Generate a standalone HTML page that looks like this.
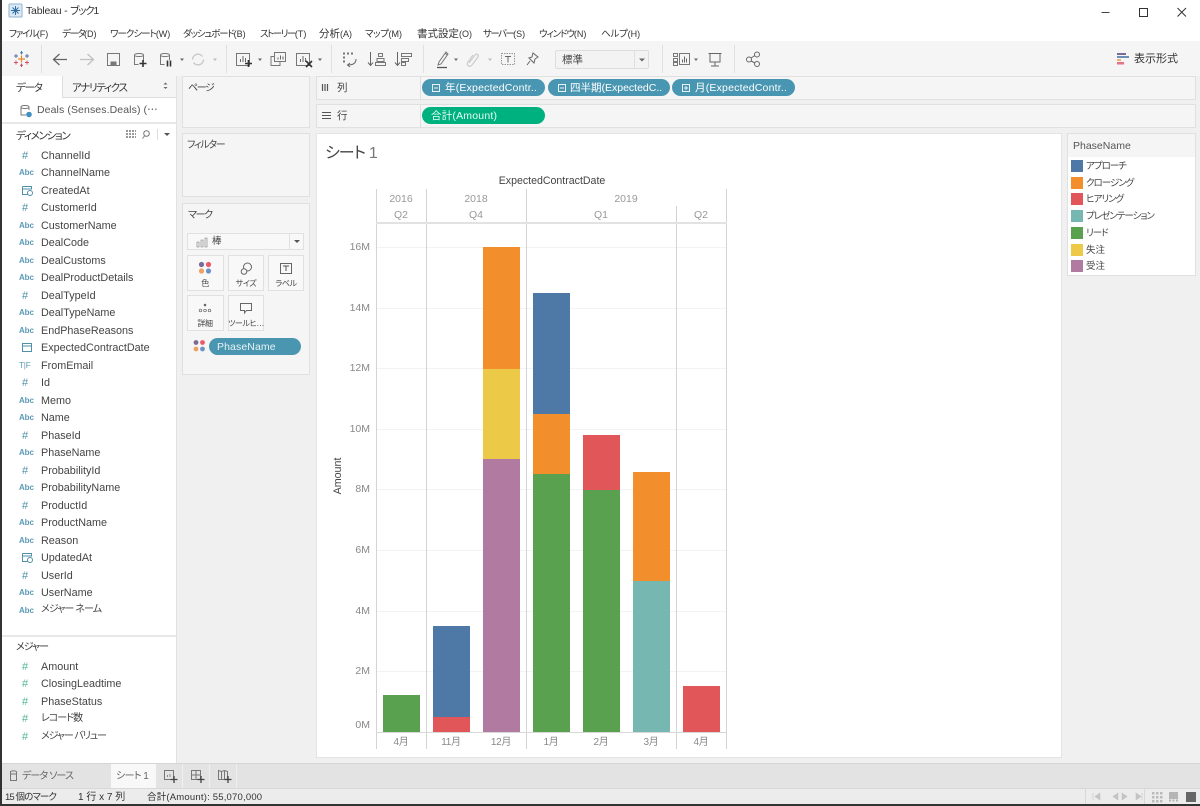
<!DOCTYPE html>
<html lang="ja"><head><meta charset="utf-8"><title>Tableau - ブック1</title>
<style>
html,body{margin:0;padding:0;background:#f0f0f0}
body{position:relative;width:1200px;height:806px;overflow:hidden;font-family:"Liberation Sans","Noto Sans CJK JP",sans-serif;color:#444;font-feature-settings:"palt";filter:blur(.3px)}
.b{position:absolute;box-sizing:border-box}
.c{position:absolute;box-sizing:border-box;background:#f5f5f5;border:1px solid #e0e0e0}
.t{position:absolute;white-space:nowrap;line-height:14px;height:14px}
.m{font-size:9.5px;color:#333;top:27px}
.m i{font-style:normal;letter-spacing:0;font-size:9px}
.f{font-size:10.8px;left:41px;color:#444;margin-top:1px}
.a{font-size:8px;left:19px;color:#5b9ab5;font-weight:bold;letter-spacing:-.1px;margin-top:1px}
.h{font-size:11px;left:22px;color:#4f8fa8;margin-top:1px}
.g{font-size:11px;left:22px;color:#4fb493;margin-top:1px}
.y{font-size:10.5px;color:#888;text-align:right;width:30px;left:340px}
.x{font-size:10px;color:#888;text-align:center;width:50px;top:736px;letter-spacing:-.3px}
.q{font-size:10.5px;color:#999;text-align:center;width:50px}
.p{position:absolute;border-radius:9px;background:#4996b2;color:#fff;font-size:10.5px;line-height:18px;height:17px;white-space:nowrap;box-sizing:border-box;overflow:hidden;letter-spacing:.2px}
.l{font-size:9.5px;letter-spacing:-1px;left:1086px;color:#444;margin-top:1px}
.s{position:absolute;left:1071px;width:12px;height:12px}
.k{font-size:8px;letter-spacing:-.4px;color:#444;text-align:center;width:36px}
.n{position:absolute;box-sizing:border-box;background:#f8f8f8;border:1px solid #e0e0e0}
.w{position:absolute;left:383px;width:37px}
</style></head><body>

<div class="b" style="left:0;top:0;width:1200px;height:41px;background:#fff"></div>
<div class="b" style="left:0;top:41px;width:1200px;height:35px;background:#f5f5f5"></div>
<div class="b" style="left:0;top:0;width:1.5px;height:806px;background:#333;z-index:9"></div>
<div class="b" style="left:0;top:804px;width:1200px;height:2px;background:#333;z-index:9"></div>

<div class="t" style="left:26px;top:4px;font-size:10.5px;letter-spacing:-.2px;color:#333">Tableau - <span style="letter-spacing:-1.2px">ブック1</span></div>
<div class="t m" style="left:9px;letter-spacing:-1.3px">ファイル<i>(F)</i></div>
<div class="t m" style="left:62px;letter-spacing:-1.5px">データ<i>(D)</i></div>
<div class="t m" style="left:110px;letter-spacing:-1px">ワークシート<i>(W)</i></div>
<div class="t m" style="left:183px;letter-spacing:-1.2px">ダッシュボード<i>(B)</i></div>
<div class="t m" style="left:260px;letter-spacing:-1.5px">ストーリー<i>(T)</i></div>
<div class="t m" style="left:319px;font-size:10.5px">分析<i>(A)</i></div>
<div class="t m" style="left:365px;letter-spacing:-.4px">マップ<i>(M)</i></div>
<div class="t m" style="left:417px;font-size:10.5px">書式設定<i>(O)</i></div>
<div class="t m" style="left:483px;letter-spacing:-1.6px">サーバー<i>(S)</i></div>
<div class="t m" style="left:539px;letter-spacing:-1.1px">ウィンドウ<i>(N)</i></div>
<div class="t m" style="left:601px;letter-spacing:-.2px">ヘルプ<i>(H)</i></div>

<div class="b" style="left:555px;top:50px;width:94px;height:19px;background:#f3f3f3;border:1px solid #ddd;border-radius:2px"></div>
<div class="t" style="left:562px;top:53px;font-size:10.5px;color:#444">標準</div>
<div class="t" style="left:1134px;top:52px;font-size:11px;color:#333;letter-spacing:0">表示形式</div>

<!-- data pane -->
<div class="b" style="left:1px;top:76px;width:175px;height:687px;background:#fff"></div>
<div class="b" style="left:62px;top:76px;width:114px;height:22px;background:#f5f5f5;border-left:1px solid #ddd;border-bottom:1px solid #ddd"></div>
<div class="b" style="left:1px;top:97px;width:61px;height:1px;background:#fff"></div>
<div class="b" style="left:176px;top:76px;width:1px;height:687px;background:#e2e2e2"></div>
<div class="b" style="left:1px;top:122px;width:175px;height:2px;background:#e8e8e8"></div>
<div class="b" style="left:1px;top:635px;width:175px;height:2px;background:#e8e8e8"></div>
<div class="t" style="left:16px;top:81px;font-size:10.5px;letter-spacing:-1.2px;color:#333">データ</div>
<div class="t" style="left:72px;top:81px;font-size:10.5px;letter-spacing:-1.3px;color:#333">アナリティクス</div>
<div class="t" style="left:37px;top:103px;font-size:10.5px;color:#555;letter-spacing:.1px">Deals (Senses.Deals) (⋯</div>
<div class="t" style="left:16px;top:129px;font-size:10.5px;letter-spacing:-1.3px;color:#333">ディメンション</div>

<div class="t h" style="top:148px">#</div><div class="t f" style="top:148px">ChannelId</div>
<div class="t a" style="top:165px">Abc</div><div class="t f" style="top:165px">ChannelName</div>
<div class="t f" style="top:183px">CreatedAt</div>
<div class="t h" style="top:200px">#</div><div class="t f" style="top:200px">CustomerId</div>
<div class="t a" style="top:218px">Abc</div><div class="t f" style="top:218px">CustomerName</div>
<div class="t a" style="top:235px">Abc</div><div class="t f" style="top:235px">DealCode</div>
<div class="t a" style="top:253px">Abc</div><div class="t f" style="top:253px">DealCustoms</div>
<div class="t a" style="top:270px">Abc</div><div class="t f" style="top:270px">DealProductDetails</div>
<div class="t h" style="top:288px">#</div><div class="t f" style="top:288px">DealTypeId</div>
<div class="t a" style="top:305px">Abc</div><div class="t f" style="top:305px">DealTypeName</div>
<div class="t a" style="top:323px">Abc</div><div class="t f" style="top:323px">EndPhaseReasons</div>
<div class="t f" style="top:340px">ExpectedContractDate</div>
<div class="t a" style="top:358px;font-weight:normal">T|F</div><div class="t f" style="top:358px">FromEmail</div>
<div class="t h" style="top:375px">#</div><div class="t f" style="top:375px">Id</div>
<div class="t a" style="top:393px">Abc</div><div class="t f" style="top:393px">Memo</div>
<div class="t a" style="top:410px">Abc</div><div class="t f" style="top:410px">Name</div>
<div class="t h" style="top:428px">#</div><div class="t f" style="top:428px">PhaseId</div>
<div class="t a" style="top:445px">Abc</div><div class="t f" style="top:445px">PhaseName</div>
<div class="t h" style="top:463px">#</div><div class="t f" style="top:463px">ProbabilityId</div>
<div class="t a" style="top:480px">Abc</div><div class="t f" style="top:480px">ProbabilityName</div>
<div class="t h" style="top:498px">#</div><div class="t f" style="top:498px">ProductId</div>
<div class="t a" style="top:515px">Abc</div><div class="t f" style="top:515px">ProductName</div>
<div class="t a" style="top:533px">Abc</div><div class="t f" style="top:533px">Reason</div>
<div class="t f" style="top:550px">UpdatedAt</div>
<div class="t h" style="top:568px">#</div><div class="t f" style="top:568px">UserId</div>
<div class="t a" style="top:585px">Abc</div><div class="t f" style="top:585px">UserName</div>
<div class="t a" style="top:603px">Abc</div><div class="t f" style="top:602px;font-size:10px;letter-spacing:-.9px">メジャー ネーム</div>

<div class="t" style="left:16px;top:641px;font-size:10px;letter-spacing:-1px;color:#333">メジャー</div>
<div class="t g" style="top:659px">#</div><div class="t f" style="top:659px">Amount</div>
<div class="t g" style="top:676px">#</div><div class="t f" style="top:676px">ClosingLeadtime</div>
<div class="t g" style="top:694px">#</div><div class="t f" style="top:694px">PhaseStatus</div>
<div class="t g" style="top:711px">#</div><div class="t f" style="top:711px;font-size:10px;letter-spacing:-1px">レコード数</div>
<div class="t g" style="top:729px">#</div><div class="t f" style="top:729px;font-size:10px;letter-spacing:-1.1px">メジャー バリュー</div>

<!-- cards -->
<div class="c" style="left:182px;top:76px;width:128px;height:52px"></div>
<div class="c" style="left:182px;top:133px;width:128px;height:64px"></div>
<div class="c" style="left:182px;top:203px;width:128px;height:172px"></div>
<div class="t" style="left:188px;top:82px;font-size:10px;letter-spacing:-1.4px;color:#444">ページ</div>
<div class="t" style="left:187px;top:139px;font-size:10px;letter-spacing:-1.3px;color:#444">フィルター</div>
<div class="t" style="left:188px;top:209px;font-size:10px;letter-spacing:-1.3px;color:#444">マーク</div>

<div class="n" style="left:187px;top:233px;width:117px;height:17px;background:#f8f8f8"></div>
<div class="b" style="left:289px;top:234px;width:1px;height:15px;background:#e0e0e0"></div>
<div class="t" style="left:212px;top:235px;font-size:9.5px;color:#444">棒</div>
<div class="n" style="left:187px;top:255px;width:37px;height:36px"></div>
<div class="n" style="left:228px;top:255px;width:36px;height:36px"></div>
<div class="n" style="left:268px;top:255px;width:36px;height:36px"></div>
<div class="n" style="left:187px;top:295px;width:37px;height:36px"></div>
<div class="n" style="left:228px;top:295px;width:36px;height:36px"></div>
<div class="t k" style="left:187px;top:277px">色</div>
<div class="t k" style="left:228px;top:277px">サイズ</div>
<div class="t k" style="left:268px;top:277px">ラベル</div>
<div class="t k" style="left:187px;top:317px">詳細</div>
<div class="t k" style="left:228px;top:317px">ツールヒ…</div>
<div class="p" style="left:209px;top:338px;width:92px;padding-left:8px;background:#4a96b0;color:#e6f2f6;font-size:10.5px;letter-spacing:.1px">PhaseName</div>

<!-- shelves -->
<div class="c" style="left:316px;top:76px;width:880px;height:24px"></div>
<div class="c" style="left:316px;top:104px;width:880px;height:24px"></div>
<div class="b" style="left:420px;top:76px;width:1px;height:24px;background:#e0e0e0"></div>
<div class="b" style="left:420px;top:104px;width:1px;height:24px;background:#e0e0e0"></div>
<div class="t" style="left:337px;top:81px;font-size:10.5px;color:#444">列</div>
<div class="t" style="left:337px;top:109px;font-size:10.5px;color:#444">行</div>
<div class="p" style="left:422px;top:79px;width:123px;padding-left:23px">年(ExpectedContr..</div>
<div class="p" style="left:548px;top:79px;width:122px;padding-left:22px;letter-spacing:0">四半期(ExpectedC..</div>
<div class="p" style="left:672px;top:79px;width:123px;padding-left:23px">月(ExpectedContr..</div>
<div class="p" style="left:422px;top:107px;width:123px;padding-left:9px;background:#00b180;color:#e6fff6">合計(Amount)</div>

<!-- view -->
<div class="b" style="left:316px;top:133px;width:746px;height:625px;background:#fff;border:1px solid #e4e4e4"></div>
<div class="t" style="left:325px;top:145px;font-size:16px;line-height:18px;height:18px;color:#444;letter-spacing:-1px">シート<span style="color:#777;font-weight:normal;margin-left:4px;letter-spacing:0">1</span></div>
<div class="t" style="left:452px;top:174px;width:200px;text-align:center;font-size:10.6px;color:#444">ExpectedContractDate</div>

<!-- gridlines -->
<div class="b" style="left:377px;top:247px;width:350px;height:1px;background:#f3f3f3"></div>
<div class="b" style="left:377px;top:308px;width:350px;height:1px;background:#f3f3f3"></div>
<div class="b" style="left:377px;top:368px;width:350px;height:1px;background:#f3f3f3"></div>
<div class="b" style="left:377px;top:429px;width:350px;height:1px;background:#f3f3f3"></div>
<div class="b" style="left:377px;top:489px;width:350px;height:1px;background:#f3f3f3"></div>
<div class="b" style="left:377px;top:550px;width:350px;height:1px;background:#f3f3f3"></div>
<div class="b" style="left:377px;top:611px;width:350px;height:1px;background:#f3f3f3"></div>
<div class="b" style="left:377px;top:671px;width:350px;height:1px;background:#f3f3f3"></div>

<!-- axis lines -->
<div class="b" style="left:376px;top:189px;width:1px;height:560px;background:#d4d4d4"></div>
<div class="b" style="left:426px;top:189px;width:1px;height:560px;background:#d4d4d4"></div>
<div class="b" style="left:526px;top:189px;width:1px;height:560px;background:#d4d4d4"></div>
<div class="b" style="left:676px;top:206px;width:1px;height:543px;background:#d4d4d4"></div>
<div class="b" style="left:726px;top:189px;width:1px;height:560px;background:#d4d4d4"></div>
<div class="b" style="left:376px;top:222px;width:351px;height:2px;background:#e2e2e2"></div>
<div class="b" style="left:376px;top:732px;width:351px;height:1px;background:#d8d8d8"></div>

<div class="t q" style="left:376px;top:192px">2016</div>
<div class="t q" style="left:451px;top:192px">2018</div>
<div class="t q" style="left:601px;top:192px">2019</div>
<div class="t q" style="left:376px;top:208px">Q2</div>
<div class="t q" style="left:451px;top:208px">Q4</div>
<div class="t q" style="left:576px;top:208px">Q1</div>
<div class="t q" style="left:676px;top:208px">Q2</div>

<div class="t y" style="top:240px">16M</div>
<div class="t y" style="top:301px">14M</div>
<div class="t y" style="top:361px">12M</div>
<div class="t y" style="top:422px">10M</div>
<div class="t y" style="top:482px">8M</div>
<div class="t y" style="top:543px">6M</div>
<div class="t y" style="top:604px">4M</div>
<div class="t y" style="top:664px">2M</div>
<div class="t y" style="top:718px">0M</div>
<div class="t" style="left:318px;top:469px;width:40px;text-align:center;font-size:10.7px;color:#444;transform:rotate(-90deg)">Amount</div>

<!-- bars -->
<div class="w" style="left:383px;top:695px;height:37px;background:#59a14f"></div>
<div class="w" style="left:433px;top:626px;height:91px;background:#4e79a7"></div>
<div class="w" style="left:433px;top:717px;height:15px;background:#e15759"></div>
<div class="w" style="left:483px;top:247px;height:122px;background:#f28e2b"></div>
<div class="w" style="left:483px;top:369px;height:90px;background:#edc948"></div>
<div class="w" style="left:483px;top:459px;height:273px;background:#b07aa1"></div>
<div class="w" style="left:533px;top:293px;height:121px;background:#4e79a7"></div>
<div class="w" style="left:533px;top:414px;height:60px;background:#f28e2b"></div>
<div class="w" style="left:533px;top:474px;height:258px;background:#59a14f"></div>
<div class="w" style="left:583px;top:435px;height:55px;background:#e15759"></div>
<div class="w" style="left:583px;top:490px;height:242px;background:#59a14f"></div>
<div class="w" style="left:633px;top:472px;height:109px;background:#f28e2b"></div>
<div class="w" style="left:633px;top:581px;height:151px;background:#76b7b2"></div>
<div class="w" style="left:683px;top:686px;height:46px;background:#e15759"></div>

<div class="t x" style="left:376px">4月</div>
<div class="t x" style="left:426px">11月</div>
<div class="t x" style="left:476px">12月</div>
<div class="t x" style="left:526px">1月</div>
<div class="t x" style="left:576px">2月</div>
<div class="t x" style="left:626px">3月</div>
<div class="t x" style="left:676px">4月</div>

<!-- legend -->
<div class="b" style="left:1067px;top:133px;width:129px;height:143px;background:#fff;border:1px solid #e0e0e0"></div>
<div class="b" style="left:1068px;top:134px;width:127px;height:23px;background:#f5f5f5"></div>
<div class="t" style="left:1073px;top:139px;font-size:10.5px;color:#555">PhaseName</div>
<div class="s" style="top:160px;background:#4e79a7"></div><div class="t l" style="top:159px">アプローチ</div>
<div class="s" style="top:177px;background:#f28e2b"></div><div class="t l" style="top:176px">クロージング</div>
<div class="s" style="top:193px;background:#e15759"></div><div class="t l" style="top:192px">ヒアリング</div>
<div class="s" style="top:210px;background:#76b7b2"></div><div class="t l" style="top:209px">プレゼンテーション</div>
<div class="s" style="top:227px;background:#59a14f"></div><div class="t l" style="top:226px">リード</div>
<div class="s" style="top:244px;background:#edc948"></div><div class="t l" style="top:243px;letter-spacing:0">失注</div>
<div class="s" style="top:260px;background:#b07aa1"></div><div class="t l" style="top:259px;letter-spacing:0">受注</div>

<!-- bottom -->
<div class="b" style="left:0;top:763px;width:1200px;height:25px;background:#e3e3e3;border-top:1px solid #d5d5d5"></div>
<div class="b" style="left:0;top:788px;width:1200px;height:16px;background:#ececec;border-top:1px solid #d8d8d8"></div>
<div class="b" style="left:111px;top:764px;width:45px;height:24px;background:#f8f8f8"></div>
<div class="b" style="left:182px;top:764px;width:1px;height:24px;background:#efefef"></div>
<div class="b" style="left:209px;top:764px;width:1px;height:24px;background:#efefef"></div>
<div class="b" style="left:236px;top:764px;width:1px;height:24px;background:#efefef"></div>
<div class="t" style="left:22px;top:770px;font-size:10px;letter-spacing:-.9px;color:#666">データ ソース</div>
<div class="t" style="left:116px;top:770px;font-size:10px;letter-spacing:-.6px;color:#666">シート 1</div>
<div class="t" style="left:5px;top:791px;font-size:9.5px;color:#333;letter-spacing:-.9px">15 個のマーク</div>
<div class="t" style="left:78px;top:791px;font-size:10px;color:#333;letter-spacing:0">1 行 x 7 列</div>
<div class="t" style="left:147px;top:791px;font-size:9.5px;color:#333;letter-spacing:.2px">合計(Amount): 55,070,000</div>

<!-- icons overlay -->
<svg class="b" style="left:0;top:0;z-index:5" width="1200" height="806" viewBox="0 0 1200 806" fill="none" stroke-width="1">
 <!-- title logo -->
 <rect x="9" y="4" width="13" height="13" fill="#dce9f5" stroke="#8fb3d0" rx="1"/>
 <path d="M15.500 6v9M11 10.500h9M12.500 7.500l6 6M18.500 7.500l-6 6" stroke="#2f6ea5"/>
 <!-- window -->
 <path d="M1101.500 12.500h8" stroke="#444"/>
 <rect x="1139.500" y="8.500" width="8" height="8" stroke="#333"/>
 <path d="M1177.500 8l8.500 8.500M1186 8l-8.500 8.500" stroke="#333"/>
 <!-- toolbar seps -->
 <path d="M41.500 45v28M226.500 45v28M331.500 45v28M423.500 45v28M662.500 45v28M734.500 45v28" stroke="#e0e0e0"/>
 <!-- tableau logo -->
 <path d="M21.500 55.500v7M18 59h7" stroke="#e8862c" stroke-width="1.200"/>
 <path d="M16 54v4M14 56h4M27 54v4M25 56h4" stroke="#5a6fa5"/>
 <path d="M16 60.500v4M14 62.500h4M27 60.500v4M25 62.500h4" stroke="#d2546a"/>
 <path d="M21.500 51v3.500M20 52.800h3" stroke="#3f7fa8"/><path d="M21.500 63.500v3.500M20 65.200h3" stroke="#c84a62"/>
 <!-- arrows -->
 <path d="M67 59.500H54M59.500 54l-6 5.500 6 5.500" stroke="#666" stroke-width="1.300"/>
 <path d="M80 59.500h13M87.500 54l6 5.500-6 5.500" stroke="#c0c0c0" stroke-width="1.300"/>
 <!-- save -->
 <rect x="107.500" y="53.500" width="12" height="12" stroke="#777"/><rect x="110.500" y="61.500" width="6" height="4" fill="#777" stroke="none"/>
 <!-- data add -->
 <path d="M134.500 55c0-2 9-2 9 0v6M134.500 55c0 2 9 2 9 0M134.500 55v9.500h4" stroke="#777"/>
 <path d="M143 60v7M139.500 63.500h7" stroke="#333" stroke-width="1.600"/>
 <!-- data pause -->
 <path d="M160.500 55c0-2 9-2 9 0v5M160.500 55c0 2 9 2 9 0M160.500 55v9.500h4" stroke="#777"/>
 <path d="M167.500 60.500v6M170.500 60.500v6" stroke="#333" stroke-width="1.600"/>
 <!-- drops -->
 <path d="M180 58.500h4l-2 2.500zM258 58.500h4l-2 2.500zM318 58.500h4l-2 2.500zM454 58.500h4l-2 2.500zM694 58.500h4l-2 2.500z" fill="#666"/>
 <path d="M213 58.500h4l-2 2.500zM488 58.500h4l-2 2.500z" fill="#bbb"/>
 <!-- refresh -->
 <path d="M192.500 59.500a5.500 5.500 0 0 1 10-3M203.500 59.500a5.500 5.500 0 0 1-10 3" stroke="#c4c4c4" stroke-width="1.300"/>
 <!-- new sheet -->
 <rect x="236.500" y="53.500" width="13" height="12" stroke="#777"/>
 <path d="M240.500 62v-3M243 62v-6M245.500 62v-4" stroke="#666"/>
 <path d="M248.500 60v7M245 63.500h7" stroke="#333" stroke-width="1.600"/>
 <!-- duplicate -->
 <rect x="274.500" y="52.500" width="11" height="9" stroke="#777"/>
 <path d="M274.500 56.500h-3.500v9h9v-4" stroke="#777"/><path d="M278 59.500v-2M280.500 59.500v-4M283 59.500v-3" stroke="#666"/>
 <!-- clear -->
 <rect x="296.500" y="53.500" width="13" height="12" stroke="#777"/>
 <path d="M300.500 62v-3M303 62v-6M305.500 62v-4" stroke="#666"/>
 <path d="M306 61l6 6M312 61l-6 6" stroke="#333" stroke-width="1.600"/>
 <!-- swap -->
 <path d="M343 53.500h2M347 53.500h2M351 53.500h2M343 57.500h2M343 61.500h2" stroke="#777" stroke-width="2"/>
 <path d="M356 59c0 4-3 6-8 6M350 63l-2.500 2 2.500 2" stroke="#666"/>
 <!-- sort -->
 <path d="M370.500 52v13M368 62.500l2.500 3 2.500-3" stroke="#666"/>
 <rect x="378.500" y="53.500" width="4" height="3" stroke="#777"/><rect x="377" y="58.500" width="7" height="3" stroke="#777"/><rect x="375.500" y="62.500" width="10" height="3" stroke="#777"/>
 <path d="M397.500 52v13M395 62.500l2.500 3 2.500-3" stroke="#666"/>
 <rect x="401.500" y="53.500" width="10" height="3" stroke="#777"/><rect x="401.500" y="58.500" width="7" height="3" stroke="#777"/><rect x="401.500" y="62.500" width="4" height="3" stroke="#777"/>
 <!-- pen -->
 <path d="M439 62l-1 3 3-1 7-10-2-2zM445 53l2 2" stroke="#777"/><path d="M437 67.500h10" stroke="#555" stroke-width="1.300"/>
 <!-- clip -->
 <path d="M469 63l6-8c2-2 4 0 3 2l-6 8c-3 3-6 0-4-3l5-7" stroke="#ccc" stroke-width="1.200"/>
 <!-- T -->
 <rect x="501.500" y="53.500" width="13" height="11" stroke="#999" stroke-dasharray="1.500 1"/>
 <path d="M505 56.500h6M508 56.500v6" stroke="#666"/>
 <!-- pin -->
 <path d="M533 53l5 4-3 2-1 4-5-5 3-1zM530 61l-3 4" stroke="#666"/>
 <!-- combo -->
 <path d="M634.500 51v17" stroke="#e0e0e0"/><path d="M639 58.500h6l-3 3z" fill="#666"/>
 <!-- cards -->
 <rect x="673.500" y="53.500" width="4" height="3" stroke="#777"/><rect x="673.500" y="58.500" width="4" height="3" stroke="#777"/><rect x="673.500" y="62.500" width="4" height="3" stroke="#777"/>
 <rect x="679.500" y="53.500" width="10" height="11" stroke="#777"/><path d="M682.500 62.500v-3M684.500 62.500v-6M686.500 62.500v-4" stroke="#666"/>
 <!-- present -->
 <path d="M708.500 53.500h13M710 53.500v8.500h10v-8.500M715 62v4M711 66h8" stroke="#666"/>
 <!-- share -->
 <circle cx="749" cy="59.500" r="2.500" stroke="#666"/><circle cx="757" cy="54.500" r="2.500" stroke="#666"/><circle cx="757" cy="64" r="2.500" stroke="#666"/>
 <path d="M751 58l4-2.500M751 61l4 2" stroke="#666"/>
 <!-- show me -->
 <rect x="1117" y="53" width="9" height="2" fill="#7a6b96"/><rect x="1117" y="56" width="12" height="2" fill="#6b8fb5"/><rect x="1117" y="59" width="4" height="2" fill="#f0b070"/><rect x="1117" y="62" width="7" height="2.500" fill="#ea7083"/>
 <!-- data pane -->
 <path d="M163.500 84.500l2-2 2 2zM163.500 87l2 2 2-2z" fill="#666"/>
 <path d="M21 107c0-2 8-2 8 0v3M21 107c0 2 8 2 8 0M21 107v8h5" stroke="#777"/><circle cx="29" cy="114.500" r="2.800" fill="#3f8fc0"/>
 <path d="M126 131h10M126 134h10M126 137h10" stroke="#999" stroke-width="2" stroke-dasharray="2 1"/>
 <circle cx="146.500" cy="133.500" r="2.800" stroke="#777"/><path d="M144.500 136l-2 2.500" stroke="#777"/>
 <path d="M157.500 129v11" stroke="#ddd"/><path d="M164 133h6l-3 3z" fill="#555"/>
 <!-- date icons -->
 <path d="M22.500 186.500h9v3M22.500 186.500v8h5M22.500 189h9" stroke="#4f8fa8"/><circle cx="30" cy="193" r="2.500" stroke="#4f8fa8"/>
 <path d="M22.500 553.500h9v3M22.500 553.500v8h5M22.500 556h9" stroke="#4f8fa8"/><circle cx="30" cy="560" r="2.500" stroke="#4f8fa8"/>
 <rect x="22.500" y="343.500" width="9" height="8" stroke="#4f8fa8"/><path d="M22.500 346h9" stroke="#4f8fa8"/>
 <!-- shelves icons -->
 <path d="M322.500 84v7M325 84v7M327.500 84v7" stroke="#555" stroke-width="1.200"/>
 <path d="M322 112.500h9M322 115.500h9M322 118.500h9" stroke="#555"/>
 <!-- pill icons -->
 <rect x="432.500" y="84.500" width="7" height="7" stroke="#e8f3f7"/><path d="M434 88h4" stroke="#e8f3f7"/>
 <rect x="558.500" y="84.500" width="7" height="7" stroke="#e8f3f7"/><path d="M560 88h4" stroke="#e8f3f7"/>
 <rect x="682.500" y="84.500" width="7" height="7" stroke="#e8f3f7"/><path d="M684 88h4M686 86v4" stroke="#e8f3f7"/>
 <!-- marks icons -->
 <path d="M197 242h2v5h-2zM201 240h2v7h-2zM205 238h2v9h-2z" stroke="#777" stroke-width=".6"/>
 <path d="M294 240h6l-3 3z" fill="#555"/>
 <circle cx="201.500" cy="264.500" r="2.600" fill="#7a6b96"/><circle cx="208.500" cy="264.500" r="2.600" fill="#ea5a6b"/><circle cx="201.500" cy="271" r="2.600" fill="#f0a060"/><circle cx="208.500" cy="271" r="2.600" fill="#6b93c5"/>
 <circle cx="247.500" cy="267" r="4" stroke="#666"/><circle cx="244" cy="271.500" r="2.800" stroke="#666" fill="#f8f8f8"/>
 <rect x="280.500" y="263.500" width="11" height="10" stroke="#666"/><path d="M283 266h6M286 266v5" stroke="#555"/>
 <circle cx="205" cy="305" r="1.300" fill="#666"/><circle cx="200.500" cy="310.500" r="1.300" stroke="#666" stroke-width=".7"/><circle cx="205" cy="310.500" r="1.300" stroke="#666" stroke-width=".7"/><circle cx="209.500" cy="310.500" r="1.300" stroke="#666" stroke-width=".7"/>
 <path d="M240.500 303.500h11v7h-5l-2 2.500v-2.500h-4z" stroke="#666"/>
 <circle cx="196" cy="342.500" r="2.400" fill="#7a6b96"/><circle cx="202.500" cy="342.500" r="2.400" fill="#ea5a6b"/><circle cx="196" cy="349" r="2.400" fill="#f0a060"/><circle cx="202.500" cy="349" r="2.400" fill="#6b93c5"/>
 <!-- tab icons -->
 <path d="M10.500 772c0-1.500 6-1.500 6 0v8.500h-6zM10.500 774h6" stroke="#777"/>
 <rect x="164.500" y="770.500" width="9" height="9" stroke="#777"/><path d="M167.500 777v-2M170 777v-3" stroke="#888"/><path d="M174 776v7M170.500 779.500h7" stroke="#444" stroke-width="1.300"/>
 <path d="M191.500 770.500h9v9h-9zM191.500 775h9M196 770.500v9" stroke="#777"/><path d="M201 776v7M197.500 779.500h7" stroke="#444" stroke-width="1.300"/>
 <path d="M218.500 770.500l3 1 3-1 3 1v8h-9zM221.500 771.500v8M224.500 771v8" stroke="#777"/><path d="M228 776v7M224.500 779.500h7" stroke="#444" stroke-width="1.300"/>
 <!-- status right -->
 <path d="M1085.500 789v15M1144.500 789v15" stroke="#d8d8d8"/>
 <path d="M1093 793v7M1100 793l-5 3.500 5 3.500zM1113 796.500l5-3.500v7zM1122 793l5 3.500-5 3.500zM1136 793l5 3.500-5 3.500zM1142 793v7" fill="#c4c4c4" stroke="#c4c4c4" stroke-width=".6"/>
 <path d="M1152 792h2.500v2.500h-2.500zM1156 792h2.500v2.500h-2.500zM1160 792h2.500v2.500h-2.500zM1152 796h2.500v2.500h-2.500zM1156 796h2.500v2.500h-2.500zM1160 796h2.500v2.500h-2.500zM1152 800h2.500v2.500h-2.500zM1156 800h2.500v2.500h-2.500zM1160 800h2.500v2.500h-2.500z" fill="#bbb"/>
 <rect x="1169" y="792" width="9" height="7" fill="#b5b5b5"/><path d="M1169 800.500h2M1172.500 800.500h2M1176 800.500h2" stroke="#b5b5b5" stroke-width="2"/>
 <rect x="1186" y="792" width="10" height="10" fill="#666"/>
</svg>
</body></html>
